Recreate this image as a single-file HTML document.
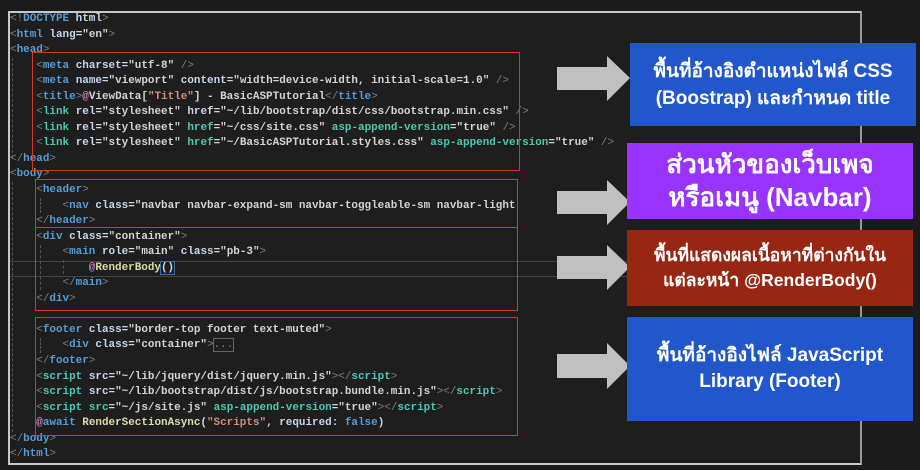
<!DOCTYPE html>
<html><head><meta charset="utf-8"><style>
body{margin:0;width:920px;height:470px;background:#1b1b1b;overflow:hidden;position:relative;font-family:"Liberation Sans","Noto Sans CJK SC",sans-serif}
.frame{position:absolute;left:8px;top:11px;width:850px;height:450px;border:2px solid #c8c8c8;border-right-color:#999;background:#1e1e1e}
pre{position:absolute;left:10px;top:12px;margin:0;font-family:"Liberation Mono",monospace;font-size:10.95px;line-height:15.55px;color:#d4d4d4;font-weight:bold}
.p{color:#7f7f7f;font-weight:normal}.t{color:#569cd6}.a{color:#c5d7ec}.s{color:#d4d4d4}.g{color:#4ec9b0}.r{color:#ce9178}.m{color:#c586c0}.y{color:#dcdcaa}
.rb{position:absolute;border:1.5px solid #d33a22}
.guide{position:absolute;border-left:1px dashed #555}
.box{position:absolute;color:#fff;text-align:center;display:flex;align-items:center;justify-content:center;font-weight:bold;font-family:"Liberation Sans","Noto Sans CJK SC",sans-serif}
</style></head><body>
<div class="frame"></div>
<div style="position:absolute;left:10px;top:261px;width:848px;height:14px;border-top:1px solid #444;border-bottom:1px solid #444"></div>
<div class="guide" style="left:12px;top:58px;height:100px"></div>
<div class="guide" style="left:12px;top:182px;height:250px"></div>
<div class="guide" style="left:40px;top:198px;height:15px"></div>
<div class="guide" style="left:40px;top:245px;height:45px"></div>
<div class="guide" style="left:63px;top:260px;height:14px"></div>
<div class="guide" style="left:40px;top:338px;height:15px"></div>
<pre><span class="p">&lt;!</span><span class="t">DOCTYPE</span> <span class="a">html</span><span class="p">&gt;</span>
<span class="p">&lt;</span><span class="t">html</span> <span class="a">lang</span>=<span class="s">"en"</span><span class="p">&gt;</span>
<span class="p">&lt;</span><span class="t">head</span><span class="p">&gt;</span>
    <span class="p">&lt;</span><span class="t">meta</span> <span class="a">charset</span>=<span class="s">"utf-8"</span> <span class="p">/&gt;</span>
    <span class="p">&lt;</span><span class="t">meta</span> <span class="a">name</span>=<span class="s">"viewport"</span> <span class="a">content</span>=<span class="s">"width=device-width, initial-scale=1.0"</span> <span class="p">/&gt;</span>
    <span class="p">&lt;</span><span class="t">title</span><span class="p">&gt;</span><span class="m">@</span>ViewData[<span class="r">"Title"</span>] - BasicASPTutorial<span class="p">&lt;/</span><span class="t">title</span><span class="p">&gt;</span>
    <span class="p">&lt;</span><span class="g">link</span> <span class="a">rel</span>=<span class="s">"stylesheet"</span> <span class="a">href</span>=<span class="s">"~/lib/bootstrap/dist/css/bootstrap.min.css"</span> <span class="p">/&gt;</span>
    <span class="p">&lt;</span><span class="g">link</span> <span class="a">rel</span>=<span class="s">"stylesheet"</span> <span class="g">href</span>=<span class="s">"~/css/site.css"</span> <span class="g">asp-append-version</span>=<span class="s">"true"</span> <span class="p">/&gt;</span>
    <span class="p">&lt;</span><span class="g">link</span> <span class="a">rel</span>=<span class="s">"stylesheet"</span> <span class="g">href</span>=<span class="s">"~/BasicASPTutorial.styles.css"</span> <span class="g">asp-append-version</span>=<span class="s">"true"</span> <span class="p">/&gt;</span>
<span class="p">&lt;/</span><span class="t">head</span><span class="p">&gt;</span>
<span class="p">&lt;</span><span class="t">body</span><span class="p">&gt;</span>
    <span class="p">&lt;</span><span class="t">header</span><span class="p">&gt;</span>
        <span class="p">&lt;</span><span class="t">nav</span> <span class="a">class</span>=<span class="s">"navbar navbar-expand-sm navbar-toggleable-sm navbar-light</span>
    <span class="p">&lt;/</span><span class="t">header</span><span class="p">&gt;</span>
    <span class="p">&lt;</span><span class="t">div</span> <span class="a">class</span>=<span class="s">"container"</span><span class="p">&gt;</span>
        <span class="p">&lt;</span><span class="t">main</span> <span class="a">role</span>=<span class="s">"main"</span> <span class="a">class</span>=<span class="s">"pb-3"</span><span class="p">&gt;</span>
            <span class="m">@</span><span class="y">RenderBody</span><span style="outline:1px solid #3d6fb0">()</span>
        <span class="p">&lt;/</span><span class="t">main</span><span class="p">&gt;</span>
    <span class="p">&lt;/</span><span class="t">div</span><span class="p">&gt;</span>

    <span class="p">&lt;</span><span class="t">footer</span> <span class="a">class</span>=<span class="s">"border-top footer text-muted"</span><span class="p">&gt;</span>
        <span class="p">&lt;</span><span class="t">div</span> <span class="a">class</span>=<span class="s">"container"</span><span class="p">&gt;</span><span class="p" style="outline:1px solid #666">...</span>
    <span class="p">&lt;/</span><span class="t">footer</span><span class="p">&gt;</span>
    <span class="p">&lt;</span><span class="g">script</span> <span class="a">src</span>=<span class="s">"~/lib/jquery/dist/jquery.min.js"</span><span class="p">&gt;&lt;/</span><span class="g">script</span><span class="p">&gt;</span>
    <span class="p">&lt;</span><span class="g">script</span> <span class="a">src</span>=<span class="s">"~/lib/bootstrap/dist/js/bootstrap.bundle.min.js"</span><span class="p">&gt;&lt;/</span><span class="g">script</span><span class="p">&gt;</span>
    <span class="p">&lt;</span><span class="g">script</span> <span class="g">src</span>=<span class="s">"~/js/site.js"</span> <span class="g">asp-append-version</span>=<span class="s">"true"</span><span class="p">&gt;&lt;/</span><span class="g">script</span><span class="p">&gt;</span>
    <span class="m">@</span><span class="t">await</span> <span class="y">RenderSectionAsync</span>(<span class="r">"Scripts"</span>, <span class="a">required</span>: <span class="t">false</span>)
<span class="p">&lt;/</span><span class="t">body</span><span class="p">&gt;</span>
<span class="p">&lt;/</span><span class="t">html</span><span class="p">&gt;</span></pre>
<div class="rb" style="left:32px;top:52px;width:486px;height:117px"></div>
<div class="rb" style="left:35px;top:179px;width:481px;height:47px"></div>
<div class="rb" style="left:35px;top:227px;width:481px;height:82px"></div>
<div class="rb" style="left:35px;top:317px;width:481px;height:117px"></div>
<svg style="position:absolute;left:0;top:0" width="920" height="470">
<g fill="#c0c0c0">
<polygon points="557,67 607,67 607,56 630,78 607,101 607,90 557,90"/>
<polygon points="557,191 607,191 607,180 630,202 607,225 607,214 557,214"/>
<polygon points="557,256 607,256 607,245 630,267 607,290 607,279 557,279"/>
<polygon points="557,354 607,354 607,343 630,366 607,389 607,378 557,378"/>
</g></svg>
<div class="box" style="left:630px;top:43px;width:286px;height:83px;background:#2257cc;font-size:19px;line-height:27px">พื้นที่อ้างอิงตำแหน่งไฟล์ CSS<br>(Boostrap) และกำหนด title</div>
<div class="box" style="left:627px;top:143px;width:286px;height:76px;background:#9933ff;font-size:26px;line-height:33px">ส่วนหัวของเว็บเพจ<br>หรือเมนู (Navbar)</div>
<div class="box" style="left:627px;top:230px;width:286px;height:76px;background:#972712;font-size:17.5px;line-height:25px">พื้นที่แสดงผลเนื้อหาที่ต่างกันใน<br>แต่ละหน้า @RenderBody()</div>
<div class="box" style="left:627px;top:317px;width:286px;height:104px;background:#2257cc;font-size:19px;line-height:26px">พื้นที่อ้างอิงไฟล์ JavaScript<br>Library (Footer)</div>
</body></html>
